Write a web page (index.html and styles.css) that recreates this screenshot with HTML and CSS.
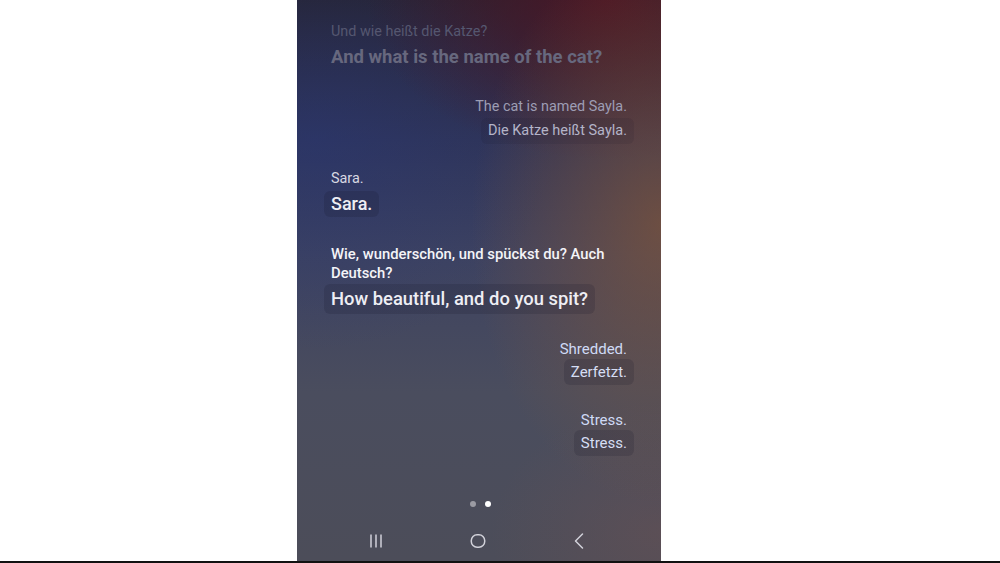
FILE: index.html
```html
<!DOCTYPE html>
<html lang="en">
<head>
<meta charset="utf-8">
<title>Interpreter</title>
<link rel="stylesheet" href="styles.css">
</head>
<body>
<div class="stage">
  <div class="phone">
    <div class="chat">
      <div class="group left faded g1">
        <div class="src">Und wie heißt die Katze?</div>
        <div class="tr big plain">And what is the name of the cat?</div>
      </div>
      <div class="group right dim g2">
        <div class="src">The cat is named Sayla.</div>
        <div class="tr">Die Katze heißt Sayla.</div>
      </div>
      <div class="group left g3">
        <div class="src">Sara.</div>
        <div class="tr big">Sara.</div>
      </div>
      <div class="group left g4">
        <div class="src strong">Wie, wunderschön, und spückst du? Auch Deutsch?</div>
        <div class="tr bigger">How beautiful, and do you spit?</div>
      </div>
      <div class="group right blue g5">
        <div class="src">Shredded.</div>
        <div class="tr">Zerfetzt.</div>
      </div>
      <div class="group right blue g6">
        <div class="src">Stress.</div>
        <div class="tr">Stress.</div>
      </div>
    </div>
    <div class="dots">
      <span class="dot"></span>
      <span class="dot on"></span>
    </div>
    <nav class="navbar">
      <svg class="nav-icon" width="20" height="20" viewBox="0 0 20 20"><path d="M5 3.5v13M10 3.5v13M15 3.5v13" stroke="#c9c9d2" stroke-width="1.6" fill="none"/></svg>
      <svg class="nav-icon" width="20" height="20" viewBox="0 0 20 20"><rect x="3.3" y="3.8" width="13.4" height="12.4" rx="5.8" stroke="#d2d2da" stroke-width="1.5" fill="none"/></svg>
      <svg class="nav-icon" width="20" height="20" viewBox="0 0 20 20"><path d="M13.5 3 L6.5 10 L13.5 17" stroke="#d2d2da" stroke-width="1.5" fill="none" stroke-linecap="round" stroke-linejoin="round"/></svg>
    </nav>
  </div>
</div>
</body>
</html>
```

FILE: styles.css
```css
* { box-sizing: border-box; }
html, body { margin: 0; padding: 0; }
body {
  width: 1000px;
  height: 563px;
  background: #ffffff;
  font-family: Roboto, "Noto Sans", "Liberation Sans", sans-serif;
  overflow: hidden;
  border-bottom: 2px solid #111111;
}
.stage {
  height: 561px;
  display: flex;
  padding-left: 297px;
}
.phone {
  width: 364px;
  height: 561px;
  display: flex;
  flex-direction: column;
  background:
    radial-gradient(ellipse 190px 280px at 100% 40%, rgba(140, 88, 50, 0.62), rgba(140, 88, 50, 0) 100%),
    radial-gradient(ellipse 240px 160px at 85% 0%, rgba(80, 20, 35, 0.85), rgba(80, 20, 35, 0) 100%),
    radial-gradient(ellipse 240px 210px at 5% 25%, rgba(40, 55, 120, 0.45), rgba(40, 55, 120, 0) 100%),
    radial-gradient(ellipse 170px 130px at 100% 95%, rgba(115, 82, 80, 0.4), rgba(115, 82, 80, 0) 100%),
    linear-gradient(180deg, #262434 0%, #2f3457 25%, #3d4260 45%, #4a4d5e 70%, #4c4d59 100%);
}
.chat {
  flex: 1;
  display: flex;
  flex-direction: column;
  padding: 22px 27px 0;
}
.group {
  display: flex;
  flex-direction: column;
  gap: 3px;
}
.group.left { align-items: flex-start; }
.group.right { align-items: flex-end; }
.src {
  font-size: 14.4px;
  line-height: 20px;
  padding: 0 7px;
  color: #d8d8e2;
}
.tr {
  font-size: 14.5px;
  line-height: 20px;
  padding: 3px 7px;
  border-radius: 6px;
  background: rgba(20, 20, 35, 0.16);
  color: #eeeef4;
}
.tr.plain { background: none; }
.tr.big { font-size: 18px; font-weight: 500; line-height: 20px; }
.faded .tr.big { font-size: 18.5px; font-weight: 700; }
.tr.bigger { font-size: 18.4px; font-weight: 500; line-height: 24px; padding: 3px 7px; }
.src.strong { font-size: 14.8px; font-weight: 500; color: #f4f4f8; max-width: 300px; line-height: 19px; }

.faded .src { color: #555770; }
.faded .tr { color: #67687e; }
.dim .src { color: #9d9db4; }
.dim .tr { color: #b4b4c8; background: rgba(20, 20, 35, 0.1); }
.blue .src { color: #cfdaf5; font-size: 15px; }
.blue .tr { color: #d6def4; font-size: 15px; }

.g1 { gap: 2px; }
.g2 { margin-top: 27px; gap: 1px; }
.g3 { margin-top: 25px; gap: 2px; }
.g4 { margin-top: 28px; gap: 1px; }
.g5 { margin-top: 25px; gap: 0; }
.g6 { margin-top: 25px; gap: 0; }

.dots {
  display: flex;
  justify-content: center;
  gap: 9px;
  padding-left: 2px;
  margin-bottom: 18px;
}
.dot {
  width: 6px;
  height: 6px;
  border-radius: 50%;
  background: #9b9ba3;
}
.dot.on { background: #ffffff; }
.navbar {
  height: 36px;
  display: flex;
  justify-content: space-between;
  align-items: center;
  padding: 0 72px 5px 69px;
}
.nav-icon { display: block; }
```
